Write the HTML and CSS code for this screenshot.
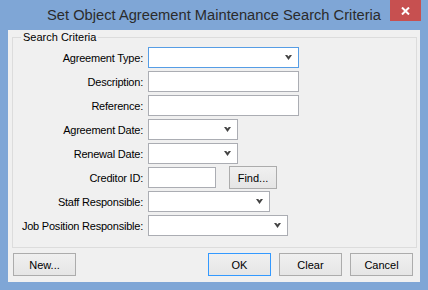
FILE: index.html
```html
<!DOCTYPE html>
<html>
<head>
<meta charset="utf-8">
<link rel="stylesheet" href="styles.css">
</head>
<body>
<div class="window">
  <div class="titlebar">
    <span class="title">Set Object Agreement Maintenance Search Criteria</span>
    <div class="close">
      <svg width="9" height="8" viewBox="0 0 9 8"><path d="M1 0.5 L8 7.5 M8 0.5 L1 7.5" stroke="#fff" stroke-width="2" fill="none"/></svg>
    </div>
  </div>
  <div class="panel">
    <fieldset class="group">
      <legend class="legend">Search Criteria</legend>
      <div class="form">
        <label class="lbl">Agreement Type:</label>
        <div class="field"><div class="box select focus w150"><svg class="arrow" width="7" height="5" viewBox="0 0 7 5"><path d="M0 0 H2.2 L3.5 1.5 L4.8 0 H7 L3.5 5 Z" fill="#444"/></svg></div></div>

        <label class="lbl">Description:</label>
        <div class="field"><div class="box w150"></div></div>

        <label class="lbl">Reference:</label>
        <div class="field"><div class="box w150"></div></div>

        <label class="lbl">Agreement Date:</label>
        <div class="field"><div class="box select w90"><svg class="arrow" width="7" height="5" viewBox="0 0 7 5"><path d="M0 0 H2.2 L3.5 1.5 L4.8 0 H7 L3.5 5 Z" fill="#444"/></svg></div></div>

        <label class="lbl">Renewal Date:</label>
        <div class="field"><div class="box select w90"><svg class="arrow" width="7" height="5" viewBox="0 0 7 5"><path d="M0 0 H2.2 L3.5 1.5 L4.8 0 H7 L3.5 5 Z" fill="#444"/></svg></div></div>

        <label class="lbl">Creditor ID:</label>
        <div class="field"><div class="box w67"></div><div class="btn find">Find...</div></div>

        <label class="lbl">Staff Responsible:</label>
        <div class="field"><div class="box select w122"><svg class="arrow" width="7" height="5" viewBox="0 0 7 5"><path d="M0 0 H2.2 L3.5 1.5 L4.8 0 H7 L3.5 5 Z" fill="#444"/></svg></div></div>

        <label class="lbl">Job Position Responsible:</label>
        <div class="field"><div class="box select w140"><svg class="arrow" width="7" height="5" viewBox="0 0 7 5"><path d="M0 0 H2.2 L3.5 1.5 L4.8 0 H7 L3.5 5 Z" fill="#444"/></svg></div></div>
      </div>
    </fieldset>
    <div class="buttons">
      <div class="btn">New...</div>
      <div class="right">
        <div class="btn default">OK</div>
        <div class="btn">Clear</div>
        <div class="btn">Cancel</div>
      </div>
    </div>
  </div>
</div>
</body>
</html>
```

FILE: styles.css
```css
html, body {
  margin: 0;
  padding: 0;
}
body {
  font-family: "Liberation Sans", Arial, sans-serif;
  font-size: 11px;
  color: #000;
}
.window {
  position: relative;
  width: 428px;
  height: 290px;
  box-sizing: border-box;
  background: #7fa6d6;
  padding: 0 8px 8px 8px;
  display: flex;
  flex-direction: column;
}
.titlebar {
  height: 30px;
  margin: 0 -8px;
  display: flex;
  align-items: center;
  justify-content: center;
}
.title {
  font-size: 14.7px;
  color: #2b2b2b;
  padding-bottom: 1px;
}
.close {
  position: absolute;
  top: 0;
  right: 7px;
  width: 31px;
  height: 21px;
  background: #c75050;
  display: flex;
  align-items: center;
  justify-content: center;
}
.panel {
  flex: 1;
  background: #f0f0f0;
  padding: 0 3px 0 4px;
  display: flex;
  flex-direction: column;
}
.group {
  margin: 0;
  padding: 3px 0 11px 0;
  border: 1px solid #dcdcdc;
  min-width: 0;
}
.legend {
  margin-left: 8px;
  padding: 0 2px;
  font-size: 11px;
  line-height: 14px;
}
.form {
  display: grid;
  grid-template-columns: 130px auto;
  column-gap: 5px;
  row-gap: 3px;
  grid-auto-rows: 21px;
}
.lbl {
  text-align: right;
  align-self: center;
  white-space: nowrap;
  letter-spacing: -0.22px;
}
.field {
  display: flex;
  align-items: center;
  gap: 13px;
}
.box {
  position: relative;
  box-sizing: border-box;
  height: 21px;
  background: #fff;
  border: 1px solid #abadb3;
}
.box.focus {
  border-color: #569de5;
}
.w150 { width: 151px; }
.w90 { width: 90px; }
.w67 { width: 68px; }
.w122 { width: 122px; }
.w140 { width: 140px; }
.arrow {
  position: absolute;
  right: 6px;
  top: 7px;
}
.btn {
  box-sizing: border-box;
  width: 63px;
  height: 23px;
  border: 1px solid #acacac;
  background: linear-gradient(#f0f0f0, #e5e5e5);
  display: flex;
  align-items: center;
  justify-content: center;
  font-size: 11px;
}
.btn.default {
  border-color: #3399ff;
}
.btn.find {
  width: 48px;
}
.buttons {
  display: flex;
  justify-content: space-between;
  padding: 5px 4px 0 1px;
}
.right {
  display: flex;
  gap: 8px;
}
```
